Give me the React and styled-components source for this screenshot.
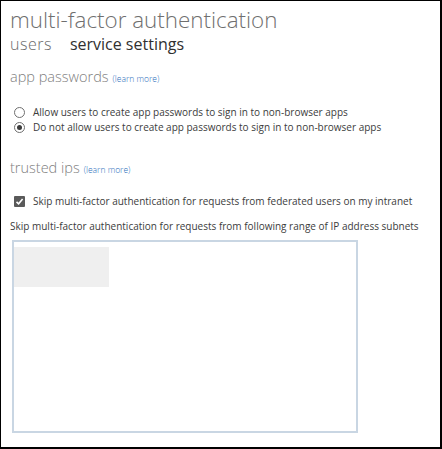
import React from 'react';
import styled, { createGlobalStyle } from 'styled-components';

const GlobalStyle = createGlobalStyle`
html, body {
margin:0px;
padding:0px;
background:#ffffff;
}
body {
font-family: "Open Sans", "Liberation Sans", sans-serif;
}
`

const Frame = styled.div`
box-sizing:border-box;
width:442px;
height:449px;
border-style:solid;
border-color:#000000;
border-width:1px 2px 2px 1px;
padding:6px 0px 0px 9px;
display:flex;
flex-direction:column;
`

const Title = styled.h1`
margin:0px;
font-weight:300;
font-size:22.4px;
line-height:26px;
color:#6f6f6f;
white-space:nowrap;
`

const Tabs = styled.div`
display:flex;
gap:18px;
margin:1px 0px 0px 0px;
`

const Tab = styled.span`
font-size:16px;
line-height:20px;
font-weight:${props => props.active ? 400 : 300};
color:${props => props.active ? '#303030' : '#6a6a6a'};
letter-spacing:${props => props.active ? '0px' : '0.5px'};
`

const SectionTitle = styled.h2`
margin:${props => props.top}px 0px 0px 0px;
font-size:14.5px;
line-height:20px;
font-weight:300;
color:#808080;
display:flex;
align-items:baseline;
gap:4px;
`

const LearnMore = styled.a`
font-size:8.5px;
color:#2a6ebb;
text-decoration:none;
`

const Options = styled.div`
display:flex;
flex-direction:column;
gap:0px;
margin:${props => props.top}px 0px 0px 4px;
`

const Option = styled.label`
display:flex;
align-items:center;
gap:8px;
font-size:10px;
line-height:15px;
color:#3c3c3c;
`

const Radio = styled.span`
box-sizing:border-box;
width:11px;
height:11px;
border-radius:50%;
border:1px solid #6f6f6f;
display:flex;
justify-content:center;
align-items:center;
&::after {
content:'';
width:5px;
height:5px;
border-radius:50%;
background:${props => props.checked ? '#3c3c3c' : 'transparent'};
}
`

const Check = styled.span`
width:11px;
height:11px;
border-radius:1px;
background:#5a5a5a;
display:flex;
justify-content:center;
align-items:center;
`

const Note = styled.div`
margin:10px 0px 0px 0px;
font-size:10px;
line-height:15px;
color:#3c3c3c;
`

const SubnetBox = styled.div`
box-sizing:border-box;
width:346px;
height:193px;
margin:6px 0px 0px 2px;
border:2px solid #c9d6e3;
padding:5px 0px 0px 0px;
`

const Placeholder = styled.div`
width:95px;
height:40px;
background:#efefef;
`

export default function App() {
    return (
        <>
            <GlobalStyle />
            <Frame>
                <Title>multi-factor authentication</Title>
                <Tabs>
                    <Tab>users</Tab>
                    <Tab active>service settings</Tab>
                </Tabs>
                <SectionTitle top={13}>app passwords <LearnMore>(learn more)</LearnMore></SectionTitle>
                <Options top={16}>
                    <Option><Radio /> Allow users to create app passwords to sign in to non-browser apps</Option>
                    <Option><Radio checked /> Do not allow users to create app passwords to sign in to non-browser apps</Option>
                </Options>
                <SectionTitle top={23}>trusted ips <LearnMore>(learn more)</LearnMore></SectionTitle>
                <Options top={14}>
                    <Option>
                        <Check>
                            <svg width="9" height="9" viewBox="0 0 9 9">
                                <path d="M1.5 4.8 L3.6 6.8 L7.6 2" stroke="#ffffff" strokeWidth="1.6" fill="none" />
                            </svg>
                        </Check>
                        Skip multi-factor authentication for requests from federated users on my intranet
                    </Option>
                </Options>
                <Note>Skip multi-factor authentication for requests from following range of IP address subnets</Note>
                <SubnetBox>
                    <Placeholder />
                </SubnetBox>
            </Frame>
        </>
    );
}
